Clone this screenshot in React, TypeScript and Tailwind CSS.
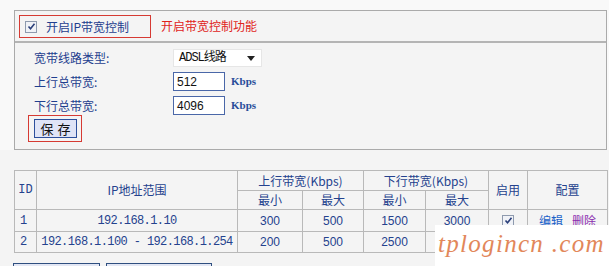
import React from "react";

const cjk = { fontFamily: '"Noto Sans CJK SC", "Liberation Sans", sans-serif' };
const mono = { fontFamily: '"Liberation Mono", "Noto Sans CJK SC", monospace' };
const arial = { fontFamily: '"Liberation Sans", Arial, sans-serif' };

function Check() {
  return (
    <span className="inline-flex w-[12px] h-[12px] border border-[#8e9aae] bg-[#f0f2f7] items-center justify-center">
      <svg width="9" height="9" viewBox="0 0 9 9">
        <path d="M1.5 4.5 L3.5 6.8 L7.5 1.8" stroke="#2a3f7a" strokeWidth="1.6" fill="none" />
      </svg>
    </span>
  );
}

export default function App() {
  const th = "border border-[#b9b9b9] font-normal text-[12px] text-[#24428e] p-0";
  const td = "border border-[#b9b9b9] text-[12px] leading-[16px] text-[#24428e] p-0";
  return (
    <div className="relative w-[609px] h-[266px] overflow-hidden bg-[#f4f4f4]" style={cjk}>
      <div className="pt-[10px] pl-[14px] pr-[2px] bg-[#f9f9f9]">
        <div className="border border-[#aaaaaa] h-[140px] bg-[#f4f4f4]">
          {/* top */}
          <div className="h-[32px] border-b-2 border-[#b4b4b4] flex items-start pt-[4px] pl-[4px]">
            <div className="w-[132px] h-[23px] border border-[#d63a33] flex items-center pl-[5px]">
              <Check />
              <span className="ml-[9px] text-[12px] text-[#1f3f8f] leading-none">开启IP带宽控制</span>
            </div>
            <span className="ml-[10px] mt-[5px] text-[12px] text-[#e0231b] leading-none">开启带宽控制功能</span>
          </div>
          {/* form */}
          <div className="pl-[19px] pt-[6px]">
            <div className="flex items-center h-[18px]">
              <span className="w-[139px] text-[12px] text-[#1f3f8f] leading-none">宽带线路类型:</span>
              <div className="w-[89px] h-[18px] bg-white border border-[#e6e6e6] flex items-center justify-between pl-[5px] pr-[6px]">
                <span className="text-[12px] text-[#111] leading-none" style={{ fontFamily: '"Liberation Mono", "Noto Sans CJK SC", monospace', letterSpacing: "-1px" }}>ADSL线路</span>
                <svg width="8" height="5" viewBox="0 0 8 5"><path d="M0 0 H8 L4 5 Z" fill="#222" /></svg>
              </div>
            </div>
            <div className="flex items-center h-[19px] mt-[5px]">
              <span className="w-[139px] text-[12px] text-[#1f3f8f] leading-none">上行总带宽:</span>
              <div className="w-[52px] h-[19px] bg-white border border-[#4a67a8] flex items-center pl-[3px]">
                <span className="text-[12px] text-[#111] leading-none" style={arial}>512</span>
              </div>
              <span className="ml-[6px] text-[11px] font-bold text-[#2a4d9a] leading-none" style={{ fontFamily: '"Liberation Serif", serif' }}>Kbps</span>
            </div>
            <div className="flex items-center h-[19px] mt-[5px]">
              <span className="w-[139px] text-[12px] text-[#1f3f8f] leading-none">下行总带宽:</span>
              <div className="w-[52px] h-[19px] bg-white border border-[#4a67a8] flex items-center pl-[3px]">
                <span className="text-[12px] text-[#111] leading-none" style={arial}>4096</span>
              </div>
              <span className="ml-[6px] text-[11px] font-bold text-[#2a4d9a] leading-none" style={{ fontFamily: '"Liberation Serif", serif' }}>Kbps</span>
            </div>
          </div>
          <div className="ml-[13px] w-[54px] h-[27px] border border-[#d63a33] pl-[5px] pt-[3px]">
            <div className="w-[43px] h-[19px] bg-[#dfe4f6] border border-[#2c4f9c] flex items-center justify-center">
              <span className="text-[13px] text-[#111] leading-none tracking-[4px] pl-[4px]">保存</span>
            </div>
          </div>
        </div>
      </div>

      {/* table */}
      <div className="pl-[14px] pt-[20px]">
        <table className="border-collapse w-[593px] table-fixed bg-[#f4f4f4]">
          <colgroup>
            <col className="w-[22px]" />
            <col className="w-[201px]" />
            <col className="w-[65px]" />
            <col className="w-[61px]" />
            <col className="w-[62px]" />
            <col className="w-[63px]" />
            <col className="w-[39px]" />
            <col className="w-[80px]" />
          </colgroup>
          <thead>
            <tr className="h-[20px]">
              <th rowSpan={2} className={th} style={mono}>ID</th>
              <th rowSpan={2} className={th}>IP地址范围</th>
              <th colSpan={2} className={th}>上行带宽(Kbps)</th>
              <th colSpan={2} className={th}>下行带宽(Kbps)</th>
              <th rowSpan={2} className={th}>启用</th>
              <th rowSpan={2} className={th}>配置</th>
            </tr>
            <tr className="h-[19px]">
              <th className={th}>最小</th>
              <th className={th}>最大</th>
              <th className={th}>最小</th>
              <th className={th}>最大</th>
            </tr>
          </thead>
          <tbody>
            <tr className="h-[22px]">
              <td className={td + " pl-[5px]"} style={mono}>1</td>
              <td className={td + " text-center tracking-[-0.6px]"} style={mono}>192.168.1.10</td>
              <td className={td + " text-center"} style={arial}>300</td>
              <td className={td + " text-center"} style={arial}>500</td>
              <td className={td + " text-center"} style={arial}>1500</td>
              <td className={td + " text-center"} style={arial}>3000</td>
              <td className={td}><div className="flex justify-center"><Check /></div></td>
              <td className={td + " text-center"}>
                <span className="text-[#1b62c9]">编辑</span>
                <span className="ml-[9px] text-[#8b2db0]">删除</span>
              </td>
            </tr>
            <tr className="h-[21px]">
              <td className={td + " pl-[5px]"} style={mono}>2</td>
              <td className={td + " text-center tracking-[-0.6px]"} style={mono}>192.168.1.100 - 192.168.1.254</td>
              <td className={td + " text-center"} style={arial}>200</td>
              <td className={td + " text-center"} style={arial}>500</td>
              <td className={td + " text-center"} style={arial}>2500</td>
              <td className={td}></td>
              <td className={td}></td>
              <td className={td}></td>
            </tr>
          </tbody>
        </table>
        <div className="flex mt-[10px] -ml-[1px] gap-[6px]">
          <div className="w-[87px] h-[22px] border border-[#2f4f80] bg-[#e3e7f4]" />
          <div className="w-[106px] h-[22px] border border-[#2f4f80] bg-[#e3e7f4]" />
        </div>
      </div>

      {/* watermark */}
      <div className="absolute left-[435px] top-[225px] w-[174px] h-[41px] bg-white">
        <span
          className="absolute left-[3px] top-[6px] text-[25px] italic text-[#e2875a] leading-none tracking-[1.3px] whitespace-nowrap"
          style={{ fontFamily: '"Liberation Serif", serif' }}
        >
          tplogincn .com
        </span>
      </div>
    </div>
  );
}
